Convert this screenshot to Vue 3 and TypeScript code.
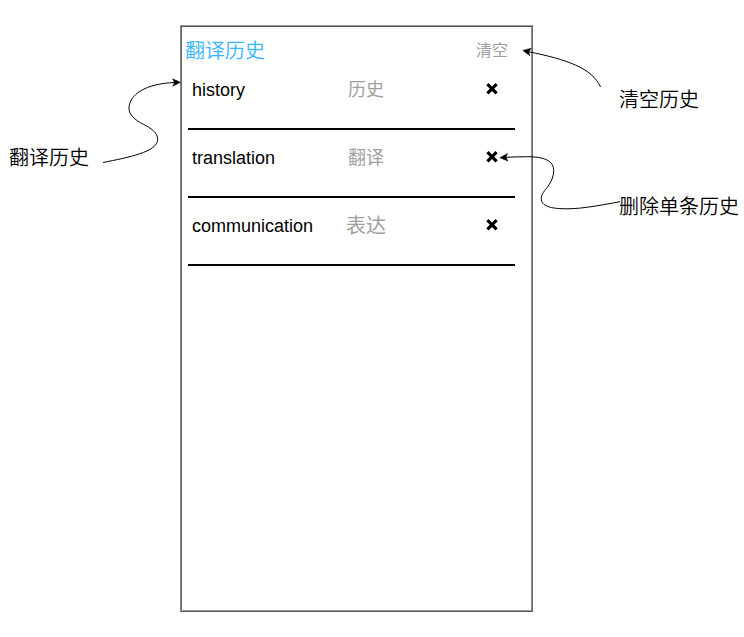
<script setup lang="ts">
import { ref } from 'vue'

interface HistoryEntry {
  id: number
  word: string
  meaning: string
  large?: boolean
}

const entries = ref<HistoryEntry[]>([
  { id: 1, word: 'history', meaning: '历史' },
  { id: 2, word: 'translation', meaning: '翻译' },
  { id: 3, word: 'communication', meaning: '表达', large: true },
])

function removeEntry(id: number): void {
  entries.value = entries.value.filter((entry) => entry.id !== id)
}

function clearEntries(): void {
  entries.value = []
}
</script>

<template>
  <div class="board">
    <aside class="notes notes-left">
      <p class="note">翻译历史</p>
      <svg class="arrow arrow-left" viewBox="100 25 81 145" aria-hidden="true">
        <path
          class="line"
          d="M103 162.5C128 157.5 157.7 152 157.7 139.3C157.7 133 151 128 143.3 124.3C135 120 129 115 129 108.3C129 95 145 83.5 175 82.5"
        />
        <path class="head" d="M180.5 82.3L172.7 86.2L174.5 82.5L172.5 78.8Z" />
      </svg>
    </aside>

    <main class="phone">
      <header class="bar">
        <h1 class="title">翻译历史</h1>
        <button class="clear" type="button" @click="clearEntries">清空</button>
      </header>
      <ul class="list">
        <li v-for="entry in entries" :key="entry.id" class="row">
          <span class="word">{{ entry.word }}</span>
          <span class="meaning" :class="{ large: entry.large }">{{ entry.meaning }}</span>
          <button class="remove" type="button" aria-label="删除" @click="removeEntry(entry.id)">
            <svg class="cross" viewBox="0 0 14 14" aria-hidden="true">
              <path d="M2.4 2.2L11.6 11.4M11.6 2.2L2.4 11.4" />
            </svg>
          </button>
        </li>
      </ul>
    </main>

    <aside class="notes notes-right">
      <p class="note">清空历史</p>
      <p class="note">删除单条历史</p>
      <svg class="arrow arrow-right" viewBox="499 25 125 190" aria-hidden="true">
        <path class="line" d="M600.5 87C592 68 567 59.5 528 51.6" />
        <path class="head" d="M522.8 50.4L531.3 48.2L528.8 51.7L529.8 55.8Z" />
        <path
          class="line"
          d="M620 201.7C603 204.8 583 208.8 567 208.8C550 208.8 541.3 206 541.3 198.5C541.3 194 544.5 191 548.3 186C552 180.5 553.7 175.5 553.7 170.7C553.7 161 545 156.7 526.7 156.7C519 156.7 512 157 505 157.4"
        />
        <path class="head" d="M499.8 157.7L507.5 153.5L505.9 157.4L507.9 161.1Z" />
      </svg>
    </aside>
  </div>
</template>

<style>
body {
  margin: 0;
  background: #fff;
}
</style>

<style scoped>
.board {
  display: grid;
  grid-template-columns: 180px minmax(0, 1fr) 211px;
  box-sizing: border-box;
  min-height: 100vh;
  padding: 25px 0;
  color: #000;
  font-family: "Liberation Sans", "Noto Sans CJK SC", sans-serif;
  font-size: 20px;
  line-height: 24px;
}

.notes {
  position: relative;
  display: flex;
  flex-direction: column;
  gap: 83px;
}

.notes-left {
  padding: 121px 0 0 9px;
}

.notes-right {
  padding: 63px 0 0 86px;
}

.note {
  margin: 0;
  font-weight: 350;
  white-space: nowrap;
}

.arrow {
  position: absolute;
  top: 0;
  pointer-events: none;
}

.arrow-left {
  right: -1px;
  width: 81px;
  height: 145px;
}

.arrow-right {
  left: -34px;
  width: 125px;
  height: 190px;
}

.line {
  fill: none;
  stroke: #000;
  stroke-width: 1;
}

.head {
  fill: #000;
  stroke: #000;
  stroke-width: 0.5;
}

.phone {
  box-sizing: border-box;
  border: 1px solid;
  border-color: #999 #6e6e6e #555 #888;
  box-shadow: inset 0 1px #555, inset 0 -1px #999, inset 1px 0 #666, inset -1px 0 #888;
  padding: 13px 1px 1px;
}

.bar {
  display: flex;
  align-items: flex-start;
  justify-content: space-between;
  height: 23px;
  padding: 0 23px 0 3px;
}

.title {
  margin: 0;
  color: #33b5ff;
  font-size: 20px;
  font-weight: 350;
}

button {
  border: 0;
  padding: 0;
  background: none;
  font: inherit;
  cursor: pointer;
}

.clear {
  color: #a0a0a0;
  font-size: 16px;
  font-weight: 400;
}

.list {
  margin: 0 16px 0 6px;
  padding: 0;
  list-style: none;
}

.row {
  display: grid;
  grid-template-columns: 12fr 5fr 9fr;
  align-items: start;
  padding: 16px 11px 26px 4px;
  border-bottom: 2px solid #000;
  font-size: 18px;
}

.meaning {
  color: #a0a0a0;
  font-weight: 400;
  text-align: center;
}

.large {
  font-size: 20px;
}

.remove {
  display: flex;
  align-items: center;
  justify-content: center;
  justify-self: end;
  width: 24px;
  height: 22px;
}

.cross {
  width: 14px;
  height: 14px;
  fill: none;
  stroke: #000;
  stroke-width: 3.2;
}
</style>
